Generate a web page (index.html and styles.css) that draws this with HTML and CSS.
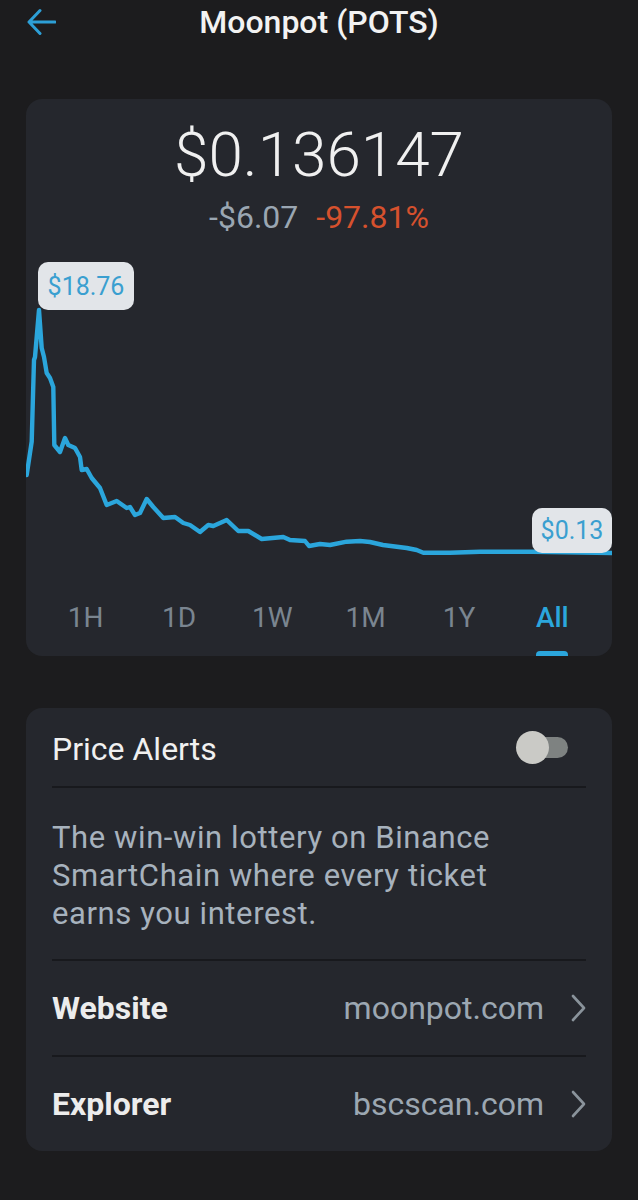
FILE: index.html
```html
<!DOCTYPE html>
<html lang="en">

<head>
    <meta charset="UTF-8">
    <title>Moonpot (POTS)</title>
    <meta name="viewport" content="width=device-width, initial-scale=1.0">
    <link rel="stylesheet" href="styles.css">
</head>

<body>

    <header class="topbar">
        <button class="back-btn" aria-label="Back">
            <svg width="30" height="28" viewBox="0 0 30 28">
                <path d="M3 14 H29 M14 2.5 L3 14 L14 25.5" fill="none" stroke="#2d9fd6" stroke-width="3"
                    stroke-linecap="round" stroke-linejoin="round" />
            </svg>
        </button>
        <h1 class="title">Moonpot (POTS)</h1>
        <span></span>
    </header>

    <section class="card price-card">
        <div class="price">$0.136147</div>
        <div class="change">
            <span class="change-abs">-$6.07</span>
            <span class="change-pct">-97.81%</span>
        </div>

        <div class="chart">
            <svg width="586" height="300" viewBox="0 0 586 300">
                <path d="M0.7 215 L5.7 181.7 L8 100 L9 97 L13 50 L15.7 88 L18 97 L20.7 113 L24 118 L27.3 127
                    L28.3 185 L34 192 L39 178 L42.3 185 L49 188 L54 197 L55.7 210 L60.7 209 L65.7 218 L74 228
                    L80.7 245 L90.7 241 L100.7 248 L104 247 L109 255 L114 253 L120.7 239 L127.3 247 L137.3 258
                    L149 257 L157.3 263 L164 265 L174 272 L182.3 265 L187.3 266 L200.7 260 L212.3 271 L222.3 271
                    L235.7 279 L257.3 277 L264 280 L279 281 L283 286 L294 284 L304 285 L320.7 281.7 L334 281
                    L344 282 L357 285 L380.7 288 L390.7 290 L397.3 292.7 L424 292.7 L454 291.7 L507 291.7 L586 293"
                    fill="none" stroke="#2ba6dc" stroke-width="4.4" stroke-linejoin="round" stroke-linecap="round" />
            </svg>
            <span class="tip tip-high">$18.76</span>
            <span class="tip tip-now">$0.13</span>
        </div>

        <nav class="ranges">
            <button class="range">1H</button>
            <button class="range">1D</button>
            <button class="range">1W</button>
            <button class="range">1M</button>
            <button class="range">1Y</button>
            <button class="range active">All</button>
        </nav>
    </section>

    <section class="card info-card">
        <div class="alert-row">
            <span class="alert-label">Price Alerts</span>
            <span class="toggle"></span>
        </div>

        <p class="about">The win-win lottery on Binance SmartChain where every ticket earns you interest.</p>

        <div class="info-row">
            <span class="info-label">Website</span>
            <span class="info-value">moonpot.com
                <svg width="16" height="28" viewBox="0 0 16 28">
                    <path d="M3 2 L14 14 L3 26" fill="none" stroke="#8a939b" stroke-width="2.6"
                        stroke-linecap="round" stroke-linejoin="round" />
                </svg>
            </span>
        </div>
        <div class="info-row">
            <span class="info-label">Explorer</span>
            <span class="info-value">bscscan.com
                <svg width="16" height="28" viewBox="0 0 16 28">
                    <path d="M3 2 L14 14 L3 26" fill="none" stroke="#8a939b" stroke-width="2.6"
                        stroke-linecap="round" stroke-linejoin="round" />
                </svg>
            </span>
        </div>
    </section>

</body>

</html>
```

FILE: styles.css
```css
body {
    margin: 0;
    background: #1c1c1e;
    font-family: Roboto, "Liberation Sans", sans-serif;
    color: #f0f0f0;
}

.topbar {
    display: grid;
    grid-template-columns: 1fr auto 1fr;
    align-items: center;
    height: 44px;
}

.back-btn {
    justify-self: start;
    display: flex;
    margin-left: 26px;
    padding: 0;
    border: none;
    background: none;
}

.title {
    margin: 0;
    font-size: 32px;
    font-weight: 500;
    line-height: 44px;
    color: #f2f2f2;
}

.card {
    margin: 0 26px;
    background: #25272d;
    border-radius: 16px;
    overflow: hidden;
}

/* price card */
.price-card {
    margin-top: 55px;
    padding-top: 20px;
}

.price {
    font-size: 62px;
    font-weight: 300;
    line-height: 72px;
    text-align: center;
    color: #f0f0f0;
}

.change {
    display: flex;
    justify-content: center;
    gap: 18px;
    margin-top: 7px;
    font-size: 32px;
    line-height: 38px;
}

.change-abs {
    color: #9aa6b2;
}

.change-pct {
    color: #d6512d;
}

.chart {
    position: relative;
    height: 300px;
    margin-top: 24px;
}

.chart svg {
    display: block;
}

.tip {
    position: absolute;
    display: flex;
    align-items: center;
    justify-content: center;
    background: #e2e5e9;
    color: #3a9fd0;
    font-size: 25px;
    border-radius: 10px;
}

.tip-high {
    left: 12px;
    top: 2px;
    width: 96px;
    height: 48px;
}

.tip-now {
    right: 0;
    top: 248px;
    width: 80px;
    height: 45px;
}

.ranges {
    display: grid;
    grid-template-columns: repeat(6, 1fr);
    padding: 42px 13px 0;
}

.range {
    display: flex;
    flex-direction: column;
    align-items: center;
    padding: 0;
    border: none;
    background: none;
    font-family: inherit;
    font-size: 28px;
    line-height: 32px;
    color: #7a8590;
}

.range::after {
    content: "";
    width: 32px;
    height: 5px;
    margin-top: 17px;
    border-radius: 4px 4px 0 0;
}

.range.active {
    color: #2ba6dc;
    font-weight: 500;
}

.range.active::after {
    background: #2ba6dc;
}

/* info card */
.info-card {
    margin-top: 52px;
    margin-bottom: 40px;
    padding: 0 26px;
}

.alert-row {
    display: flex;
    align-items: center;
    justify-content: space-between;
    height: 78px;
    border-bottom: 2px solid #18191d;
}

.alert-label {
    padding-top: 4px;
    font-size: 32px;
}

.toggle {
    position: relative;
    width: 52px;
    height: 33px;
    margin-right: 18px;
}

.toggle::before {
    content: "";
    position: absolute;
    left: 16px;
    top: 6px;
    width: 36px;
    height: 21px;
    border-radius: 11px;
    background: #7e8281;
}

.toggle::after {
    content: "";
    position: absolute;
    left: 0;
    top: 0;
    width: 33px;
    height: 33px;
    border-radius: 50%;
    background: #cacac6;
}

.about {
    max-width: 470px;
    margin: 0;
    padding: 31px 0 26px;
    font-size: 31px;
    line-height: 38px;
    letter-spacing: 0.6px;
    color: #a7b2bd;
}

.info-row {
    display: flex;
    align-items: center;
    justify-content: space-between;
    height: 94px;
    border-top: 2px solid #18191d;
}

.info-label {
    font-size: 32px;
    font-weight: 700;
    color: #ececec;
}

.info-value {
    display: flex;
    align-items: center;
    gap: 26px;
    font-size: 32px;
    color: #9ca7b2;
}
```
